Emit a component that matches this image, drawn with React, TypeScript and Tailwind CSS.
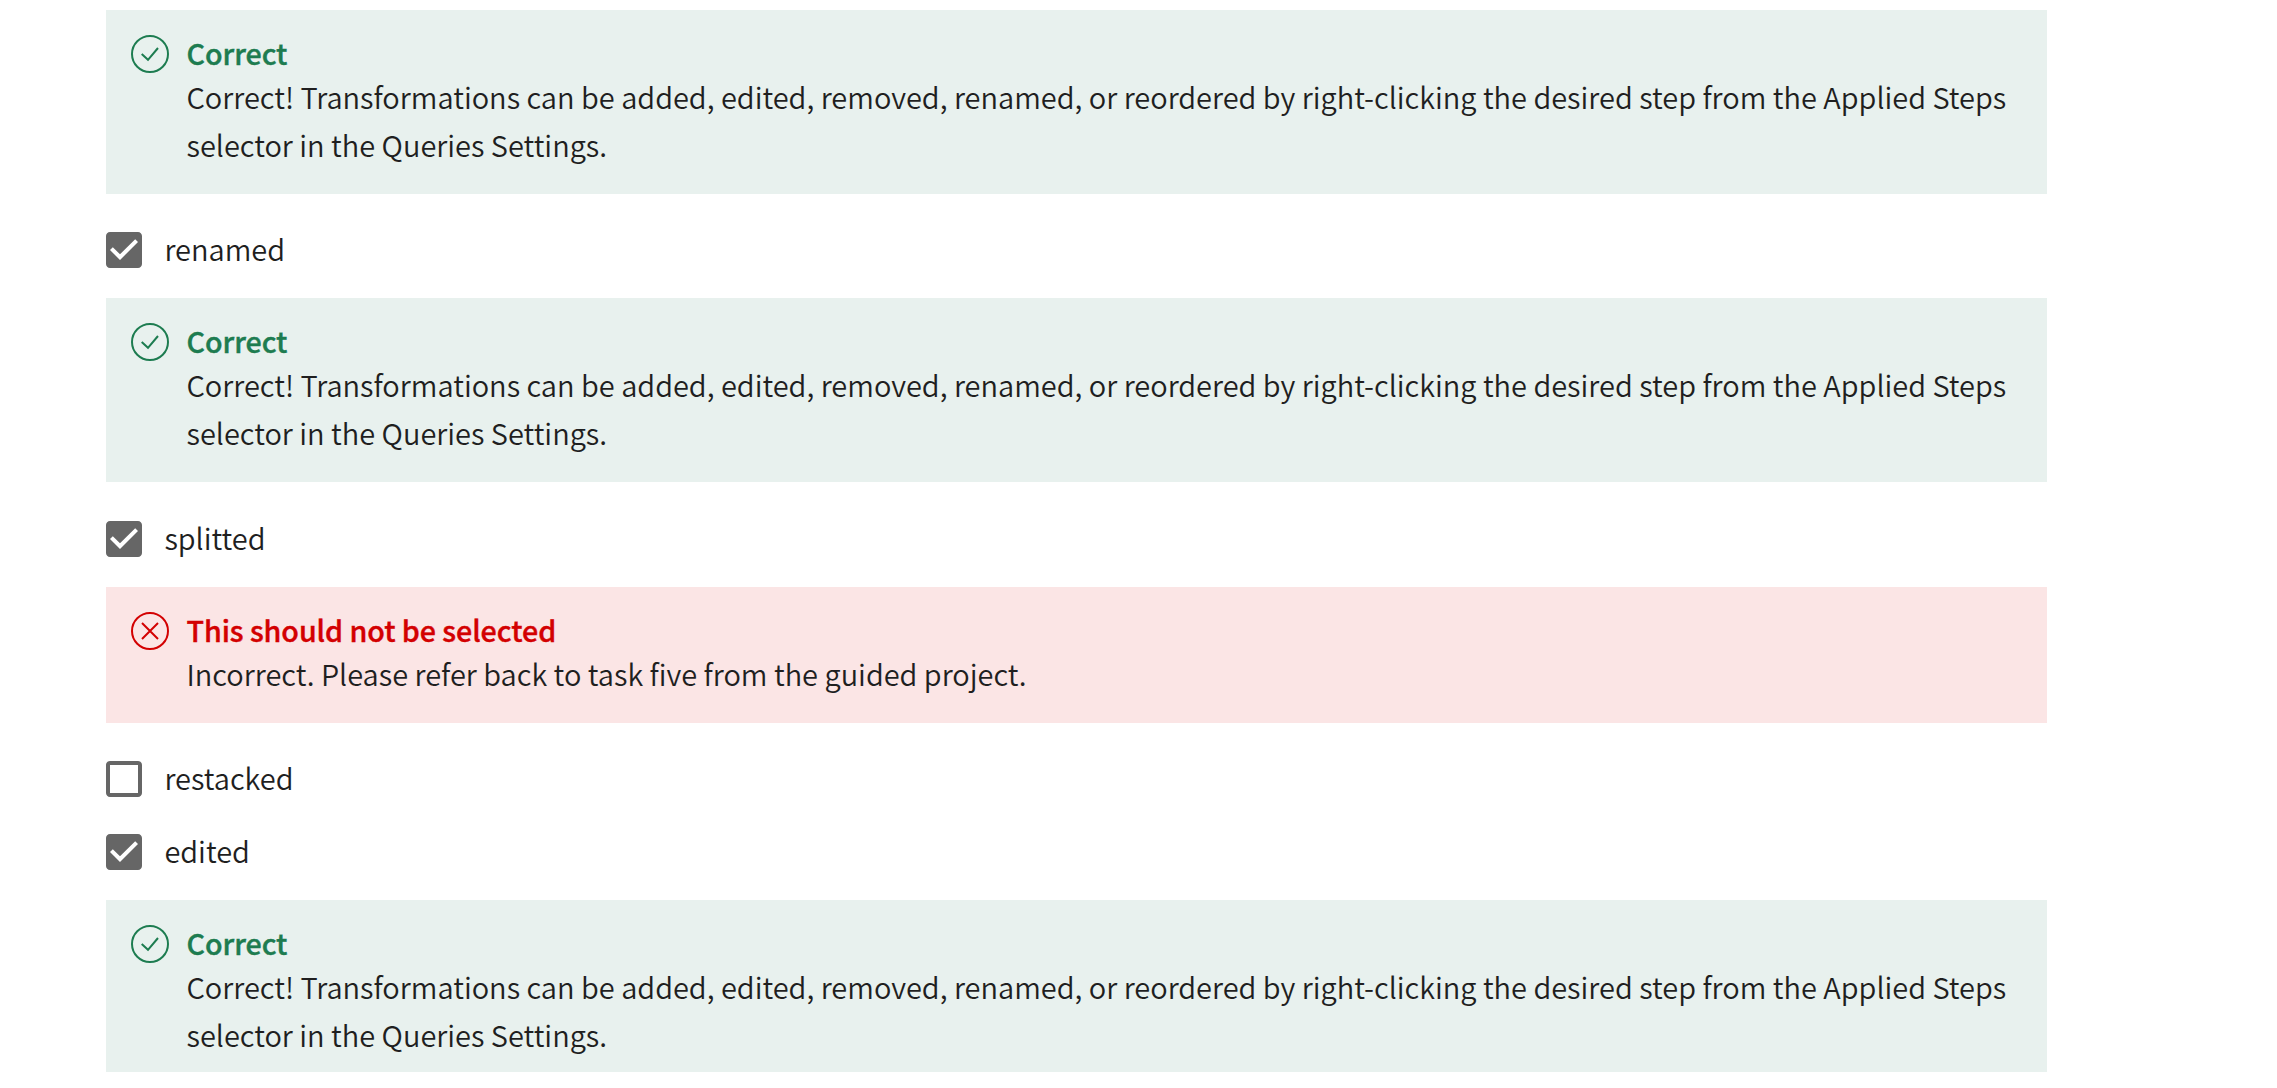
import React from "react";

const CORRECT_LINES = [
  "Correct! Transformations can be added, edited, removed, renamed, or reordered by right-clicking the desired step from the Applied Steps",
  "selector in the Queries Settings.",
];
const INCORRECT_LINES = ["Incorrect. Please refer back to task five from the guided project."];

function StatusIcon({ ok }: { ok: boolean }) {
  return (
    <svg
      className="mt-[25px] h-[38px] w-[38px] shrink-0"
      viewBox="0 0 38 38"
      fill="none"
      stroke="currentColor"
      strokeWidth="2"
    >
      <circle cx="19" cy="19" r="18" />
      {ok ? <path d="M10.7 19 17 24.8 27 13" /> : <path d="M11 11 27 27M27 11 11 27" />}
    </svg>
  );
}

function Feedback({ ok, cut = false }: { ok: boolean; cut?: boolean }) {
  const lines = ok ? CORRECT_LINES : INCORRECT_LINES;
  const height = cut ? "h-[172px]" : ok ? "h-[184px]" : "h-[136px]";
  const tone = ok ? "bg-[#e8f1ee] text-[#1d7c50]" : "bg-[#fbe5e5] text-[#d30001]";
  return (
    <section className={`flex shrink-0 items-start overflow-hidden pl-[25px] ${height} ${tone}`}>
      <StatusIcon ok={ok} />
      <div className="ml-[17.5px] flex flex-col whitespace-nowrap pt-[23px]">
        <h2 className="h-[39px] text-[28.65px] font-medium leading-[40px] tracking-[-0.06px] [-webkit-text-stroke:0.4px_currentColor]">
          {ok ? "Correct" : "This should not be selected"}
        </h2>
        {lines.map((line) => (
          <p key={line} className="h-[48px] text-[28.97px] font-[350] leading-[48px] text-[#1f1f1f]">
            {line}
          </p>
        ))}
      </div>
    </section>
  );
}

function Option({ label, checked = false }: { label: string; checked?: boolean }) {
  return (
    <label className="flex h-[36px] shrink-0 items-center">
      <svg className="h-[36px] w-[36px] shrink-0" viewBox="3 3 18 18" fill="#666666">
        {checked ? (
          <path d="M19 3H5c-1.11 0-2 .9-2 2v14c0 1.1.89 2 2 2h14c1.11 0 2-.9 2-2V5c0-1.1-.89-2-2-2zm-9 14l-5-5 1.41-1.41L10 14.17l7.59-7.59L19 8l-9 9z" />
        ) : (
          <path d="M19 5v14H5V5h14m0-2H5c-1.1 0-2 .9-2 2v14c0 1.1.9 2 2 2h14c1.1 0 2-.9 2-2V5c0-1.1-.9-2-2-2z" />
        )}
      </svg>
      <span className="pb-1 pl-[22.4px] text-[28.97px] font-[350] leading-[36px] text-[#1f1f1f]">{label}</span>
    </label>
  );
}

export default function App() {
  return (
    <main className="h-[1088px] overflow-hidden bg-white pl-[106px] pt-[10px] font-['Noto_Sans_CJK_SC',sans-serif]">
      <div className="flex w-[1941px] flex-col">
        <Feedback ok />
        <div className="flex flex-col pt-[38px] pb-[30px]">
          <Option label="renamed" checked />
        </div>
        <Feedback ok />
        <div className="flex flex-col pt-[39px] pb-[30px]">
          <Option label="splitted" checked />
        </div>
        <Feedback ok={false} />
        <div className="flex flex-col gap-[37px] pt-[38px] pb-[30px]">
          <Option label="restacked" />
          <Option label="edited" checked />
        </div>
        <Feedback ok cut />
      </div>
    </main>
  );
}
